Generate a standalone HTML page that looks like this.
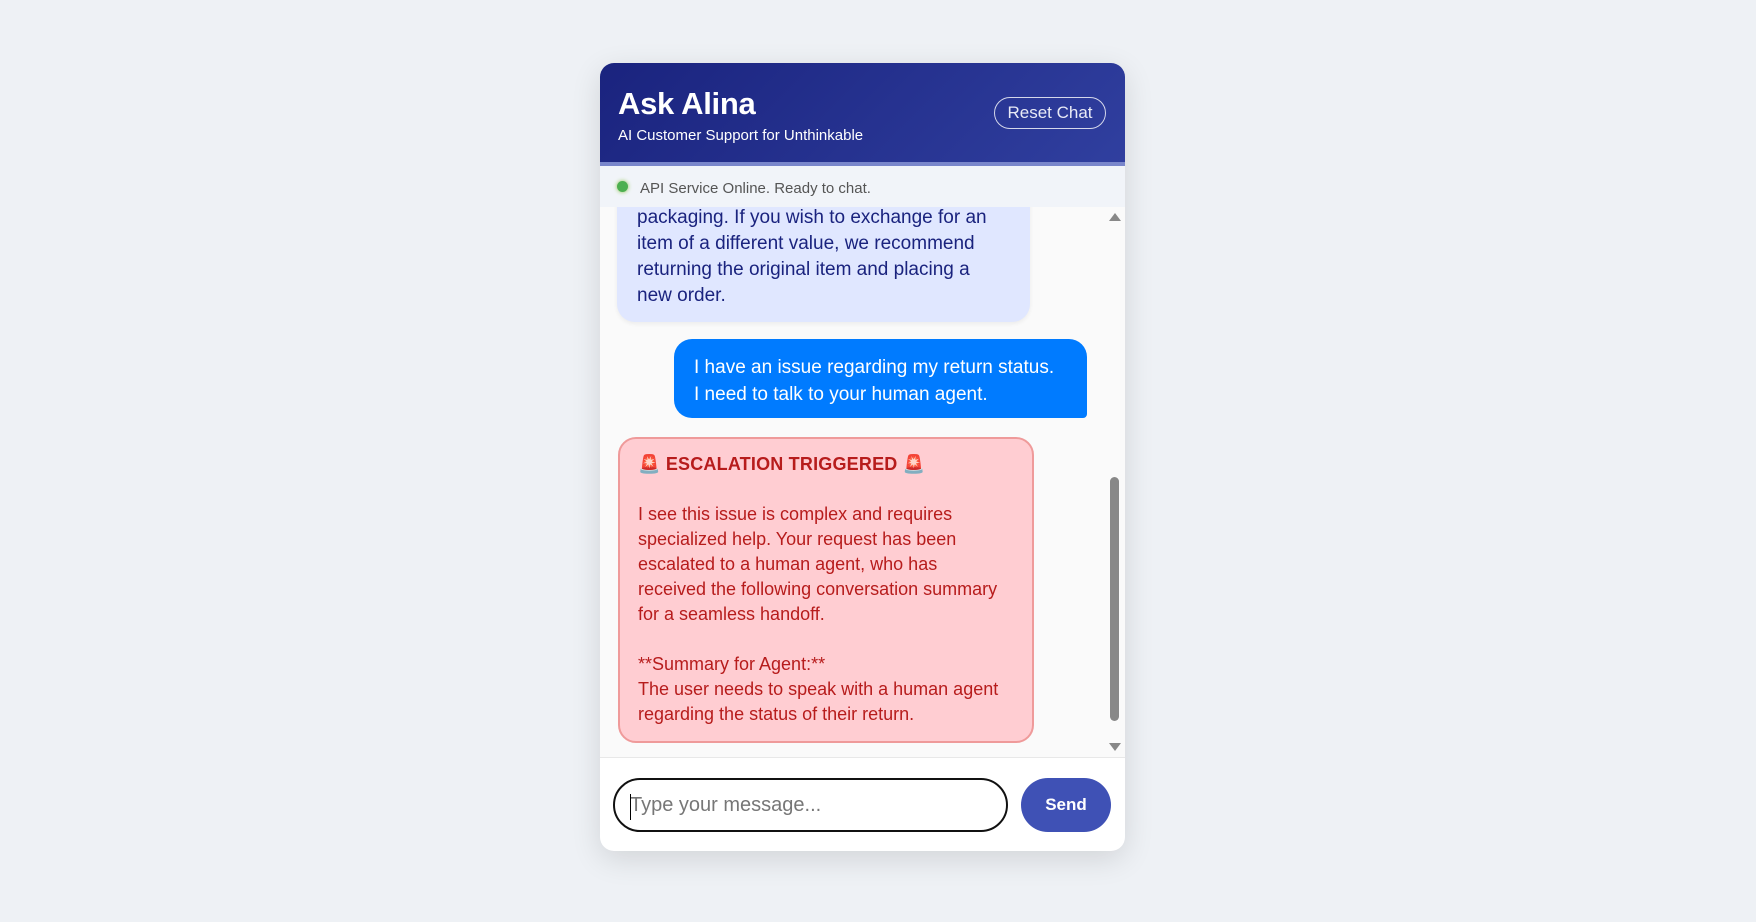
<!DOCTYPE html>
<html><head><meta charset="utf-8"><style>
*{box-sizing:border-box;margin:0;padding:0}
body{width:1756px;height:922px;background:#eef1f5;font-family:"Liberation Sans",sans-serif;position:relative;overflow:hidden}
.card{position:absolute;left:600px;top:63px;width:525px;height:788px;background:#fff;border-radius:14px;overflow:hidden;box-shadow:0 8px 30px rgba(0,0,0,0.12)}
.hdr{position:absolute;left:0;top:0;width:100%;height:103px;background:linear-gradient(135deg,#1a237e,#303f9f);border-bottom:4px solid #7986cb}
.hdr h1{position:absolute;left:18px;top:23px;color:#fff;font-size:31px;font-weight:bold;letter-spacing:-0.3px}
.hdr .sub{position:absolute;left:18px;top:64px;color:#fff;font-size:15px}
.reset{position:absolute;left:394px;top:34px;width:112px;height:32px;border:1.5px solid rgba(255,255,255,.8);border-radius:16px;color:#e8eaf6;font-size:17px;text-align:center;line-height:29px}
.status{position:absolute;left:0;top:103px;width:100%;height:41px;background:#f1f4f9;color:#555;font-size:15px}
.dot{position:absolute;left:17px;top:15px;width:11px;height:11px;border-radius:50%;background:#4caf50;box-shadow:0 0 4px #8bc34a}
.status span{position:absolute;left:40px;top:14px}
.chat{position:absolute;left:0;top:144px;width:100%;height:551px;background:#fafafa;overflow:hidden;border-bottom:1px solid #e8e8e8}
.m{position:absolute;font-size:19px;line-height:26px;white-space:nowrap}
.bot{left:17px;top:-30px;width:413px;height:145px;background:#e0e7ff;color:#1a237e;border-radius:0 0 18px 18px;padding:28px 20px 0;box-shadow:0 2px 4px rgba(0,0,0,.06)}
.user{left:74px;top:132px;width:413px;height:79px;background:#007bff;color:#fff;border-radius:18px 18px 4px 18px;padding:15px 20px;line-height:27px}
.esc{left:18px;top:230px;width:416px;height:306px;background:#ffcdd2;border:2px solid #ef9a9a;border-radius:18px;color:#b71c1c;font-size:18px;line-height:25px;padding:13px 18px}
.esc b{font-size:18px;letter-spacing:0.2px}
.sb{position:absolute;left:1110px;top:477px;width:9px;height:244px;background:#888;border-radius:5px}
.arr{position:absolute;left:1109px;width:0;height:0;border-left:6px solid transparent;border-right:6px solid transparent}
.in{position:absolute;left:13px;top:715px;width:395px;height:54px;border:2px solid #111;border-radius:27px;font-size:20px;color:#777;padding:14px 15px}
.in i{position:absolute;left:15px;top:14px;width:1px;height:26px;background:#000}
.send{position:absolute;left:421px;top:715px;width:90px;height:54px;background:#3f51b5;border-radius:28px;color:#fff;font-weight:bold;font-size:17px;text-align:center;line-height:54px}
</style></head><body>
<div class="card">
<div class="hdr"><h1>Ask Alina</h1><div class="sub">AI Customer Support for Unthinkable</div><div class="reset">Reset Chat</div></div>
<div class="status"><div class="dot"></div><span>API Service Online. Ready to chat.</span></div>
<div class="chat">
<div class="m bot">packaging. If you wish to exchange for an<br>item of a different value, we recommend<br>returning the original item and placing a<br>new order.</div>
<div class="m user">I have an issue regarding my return status.<br>I need to talk to your human agent.</div>
<div class="m esc"><b>🚨 ESCALATION TRIGGERED 🚨</b><br><br>I see this issue is complex and requires<br>specialized help. Your request has been<br>escalated to a human agent, who has<br>received the following conversation summary<br>for a seamless handoff.<br><br>**Summary for Agent:**<br>The user needs to speak with a human agent<br>regarding the status of their return.</div>
</div>
<div class="in"><i></i>Type your message...</div>
<div class="send">Send</div>
</div>
<div class="sb"></div>
<div class="arr" style="top:213px;border-bottom:8px solid #888"></div>
<div class="arr" style="top:743px;border-top:8px solid #888"></div>
</body></html>
